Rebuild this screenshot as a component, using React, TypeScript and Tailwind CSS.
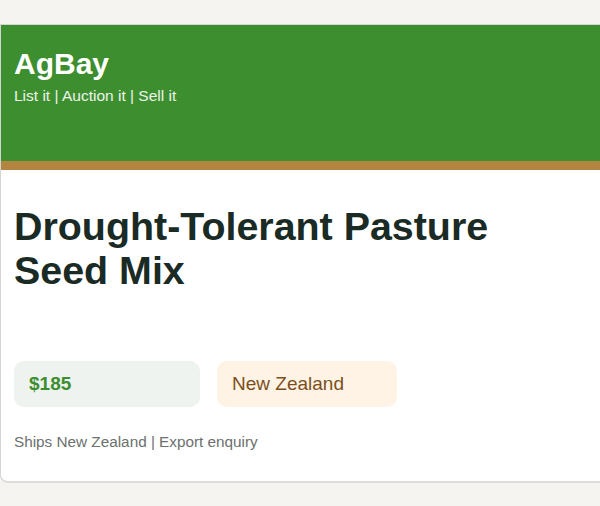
import React from 'react';

const listing = {
    title: 'Drought-Tolerant Pasture Seed Mix',
    price: '$185',
    location: 'New Zealand',
    shipping: 'Ships New Zealand | Export enquiry',
};

const App: React.FC = () => {
    return (
        <div className="min-h-screen w-full overflow-hidden bg-[#f5f4f0] pt-6 font-['Liberation_Sans',Arial,sans-serif]">
            <div className="w-[640px] bg-white border border-[#d3d7d1] border-b-2 border-b-[#dcdcda] rounded-bl-lg overflow-hidden">
                <header className="h-[145px] bg-[#3d8e2e] border-b-[9px] border-[#b38540] px-[13px] pt-[21px]">
                    <h1 className="text-[30px] leading-[36px] font-bold text-white">AgBay</h1>
                    <p className="mt-[3px] text-[15.5px] leading-[22px] text-white/90">List it | Auction it | Sell it</p>
                </header>
                <main className="px-[13px] pt-[34px] pb-[27px]">
                    <h2 className="text-[39.4px] leading-[44px] font-bold text-[#1a2a24]">
                        Drought-Tolerant Pasture
                        <br />
                        Seed Mix
                    </h2>
                    <div className="mt-[69px] flex gap-[17px]">
                        <div className="w-[186px] h-[46px] flex items-center px-[15px] rounded-[10px] bg-[#eef3ef]">
                            <span className="text-[19px] font-bold text-[#3d8e2e]">{listing.price}</span>
                        </div>
                        <div className="w-[180px] h-[46px] flex items-center px-[15px] rounded-[10px] bg-[#fef3e4]">
                            <span className="text-[19px] text-[#7b4f1c]">{listing.location}</span>
                        </div>
                    </div>
                    <p className="mt-[23px] text-[15.3px] leading-[24px] text-[#6b716e]">{listing.shipping}</p>
                </main>
            </div>
        </div>
    );
};

export default App;
